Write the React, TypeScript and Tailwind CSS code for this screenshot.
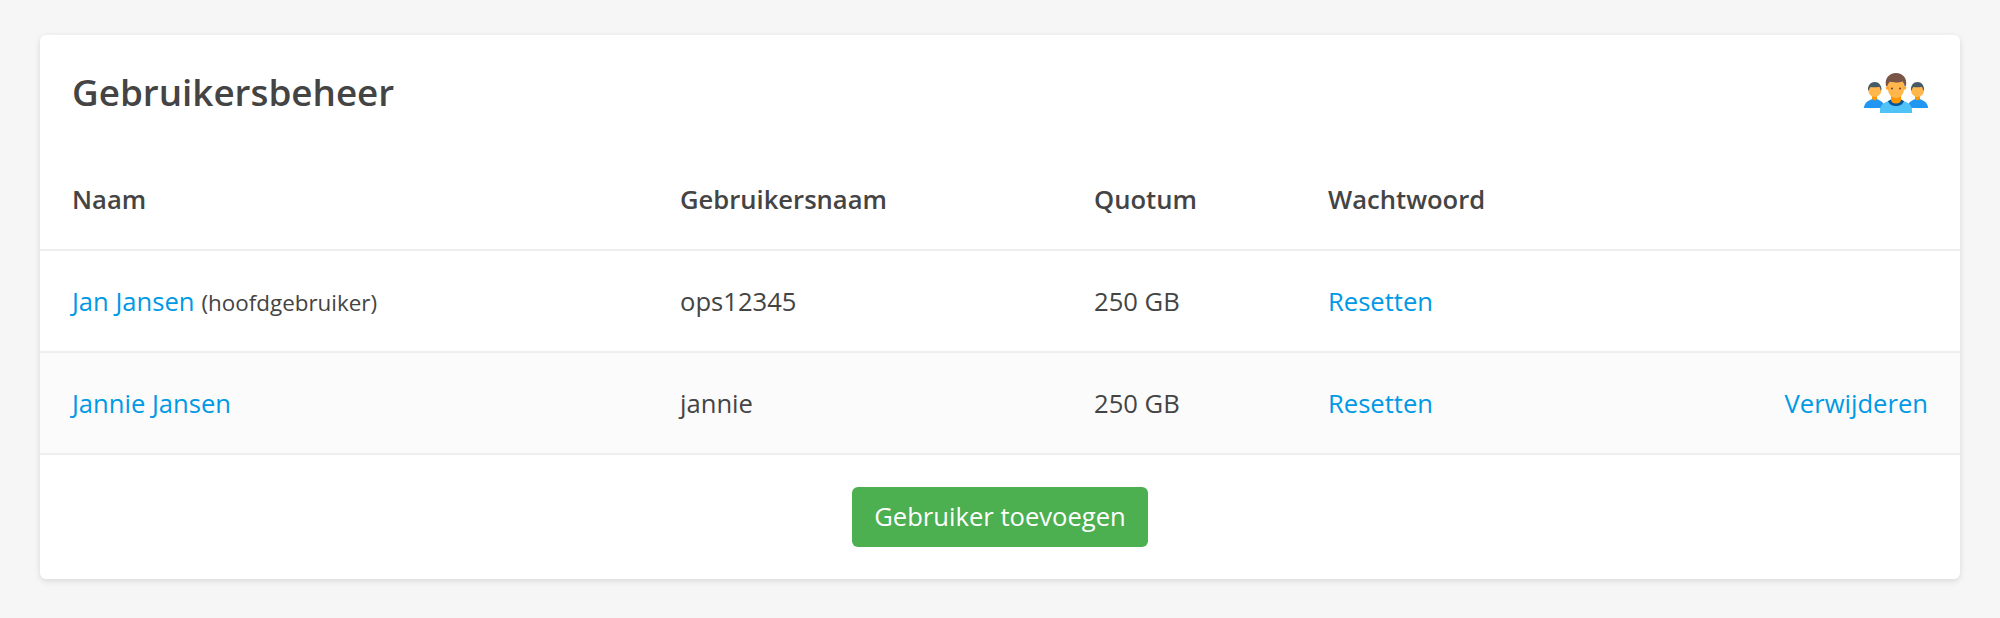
const rows = [
  { name: 'Jan Jansen', note: '(hoofdgebruiker)', user: 'ops12345', quota: '250 GB', remove: false },
  { name: 'Jannie Jansen', note: '', user: 'jannie', quota: '250 GB', remove: true },
]

const cols = 'grid grid-cols-[608px_414px_234px_1fr_auto] items-center px-[32px]'

function UsersIcon() {
  return (
    <svg viewBox="0 0 64 40" className="h-[40px] w-[64px]">
      {/* side figures */}
      <path d="M0 35c0-4 3-7 7-8.500l3.500-1 3.500 1c4 1.500 6.500 4.500 6.500 8.500z" fill="#2196f3" />
      <path d="M43.500 35c0-4 2.500-7 6.500-8.500l3.500-1 3.500 1c4 1.500 7 4.500 7 8.500z" fill="#2196f3" />
      <path d="M8 21h5v5l-2.500 1.500-2.500-1.500z" fill="#ff9800" />
      <path d="M51 21h5v5l-2.500 1.500-2.500-1.500z" fill="#ff9800" />
      <circle cx="10.750" cy="17.500" r="6.500" fill="#ffb74d" />
      <circle cx="53.500" cy="17.500" r="6.500" fill="#ffb74d" />
      <path d="M4 17c-.3-4.500 2.800-8 6.750-8s7 3.500 6.750 8l-.8.5c-.2-1.500-.6-2.800-1.300-3.700-2.200.7-6.500.7-8.800.2-.8 1-1.500 2-1.800 3.500z" fill="#455a64" />
      <path d="M47 17c-.3-4.500 2.500-8 6.500-8s6.800 3.500 6.500 8l-.8.5c-.2-1.500-.6-2.800-1.300-3.700-2.200.7-6.300.7-8.600.2-.8 1-1.300 2-1.500 3.500z" fill="#455a64" />
      {/* middle figure */}
      <path d="M16 40v-3c0-4 3-7 7-8.500l9-2 9 2c4 1.500 7 4.500 7 8.500v3z" fill="#4fc3f7" />
      <path d="M24 28c1 3 4 5 8 5s7-2 8-5l-3-1.500-5-1-5 1z" fill="#01579b" />
      <path d="M27 22h10v5c0 2-2 3.500-5 3.500s-5-1.500-5-3.500z" fill="#ff9800" />
      <path d="M24 9h16v7c0 5-3.500 9-8 9s-8-4-8-9z" fill="#ffb74d" />
      <circle cx="23.500" cy="15" r="1.800" fill="#ffa726" />
      <circle cx="40.500" cy="15" r="1.800" fill="#ffa726" />
      <path d="M22 13c-1.500-7.500 3-13 10-13s11.500 5.500 10 13l-1.500.5c0-2-.7-3.500-2-5-3 1.200-9 1.200-12.500.3-1.500 1.300-2.300 2.700-2.500 4.700z" fill="#795548" />
      <circle cx="28" cy="15.500" r="1" fill="#5d4037" />
      <circle cx="36" cy="15.500" r="1" fill="#5d4037" />
    </svg>
  )
}

export default function App() {
  return (
    <div className="h-[618px] bg-[#f6f6f6] px-[40px] pt-[35px] font-['Open_Sans',sans-serif] text-[25.6px] text-[#444]">
      <div className="rounded-[6px] bg-white shadow-[0_2px_6px_rgba(0,0,0,0.12)]">
        <div className="flex h-[115px] items-center justify-between px-[32px]">
          <h1 className="text-[36.8px] font-semibold leading-none">Gebruikersbeheer</h1>
          <div className="mt-[1px] flex"><UsersIcon /></div>
        </div>

        <div className={`${cols} h-[101px] border-b-2 border-[#eeeeee] pt-[1px] font-semibold`}>
          <div>Naam</div>
          <div>Gebruikersnaam</div>
          <div>Quotum</div>
          <div>Wachtwoord</div>
          <div />
        </div>

        {rows.map((row) => (
          <div
            key={row.user}
            className={`${cols} h-[102px] border-b-2 border-[#eeeeee] pt-[2px] ${row.remove ? 'bg-[#fbfbfb]' : ''}`}
          >
            <div>
              <a className="text-[#0099e5]">{row.name}</a>
              {row.note && <span className="ml-[7px] text-[22.400px]">{row.note}</span>}
            </div>
            <div>{row.user}</div>
            <div>{row.quota}</div>
            <div><a className="text-[#0099e5]">Resetten</a></div>
            <div>{row.remove && <a className="text-[#0099e5]">Verwijderen</a>}</div>
          </div>
        ))}

        <div className="flex h-[124px] items-start justify-center pt-[32px]">
          <button className="h-[60px] w-[296px] rounded-[6px] bg-[#4caf50] text-white">Gebruiker toevoegen</button>
        </div>
      </div>
    </div>
  )
}
